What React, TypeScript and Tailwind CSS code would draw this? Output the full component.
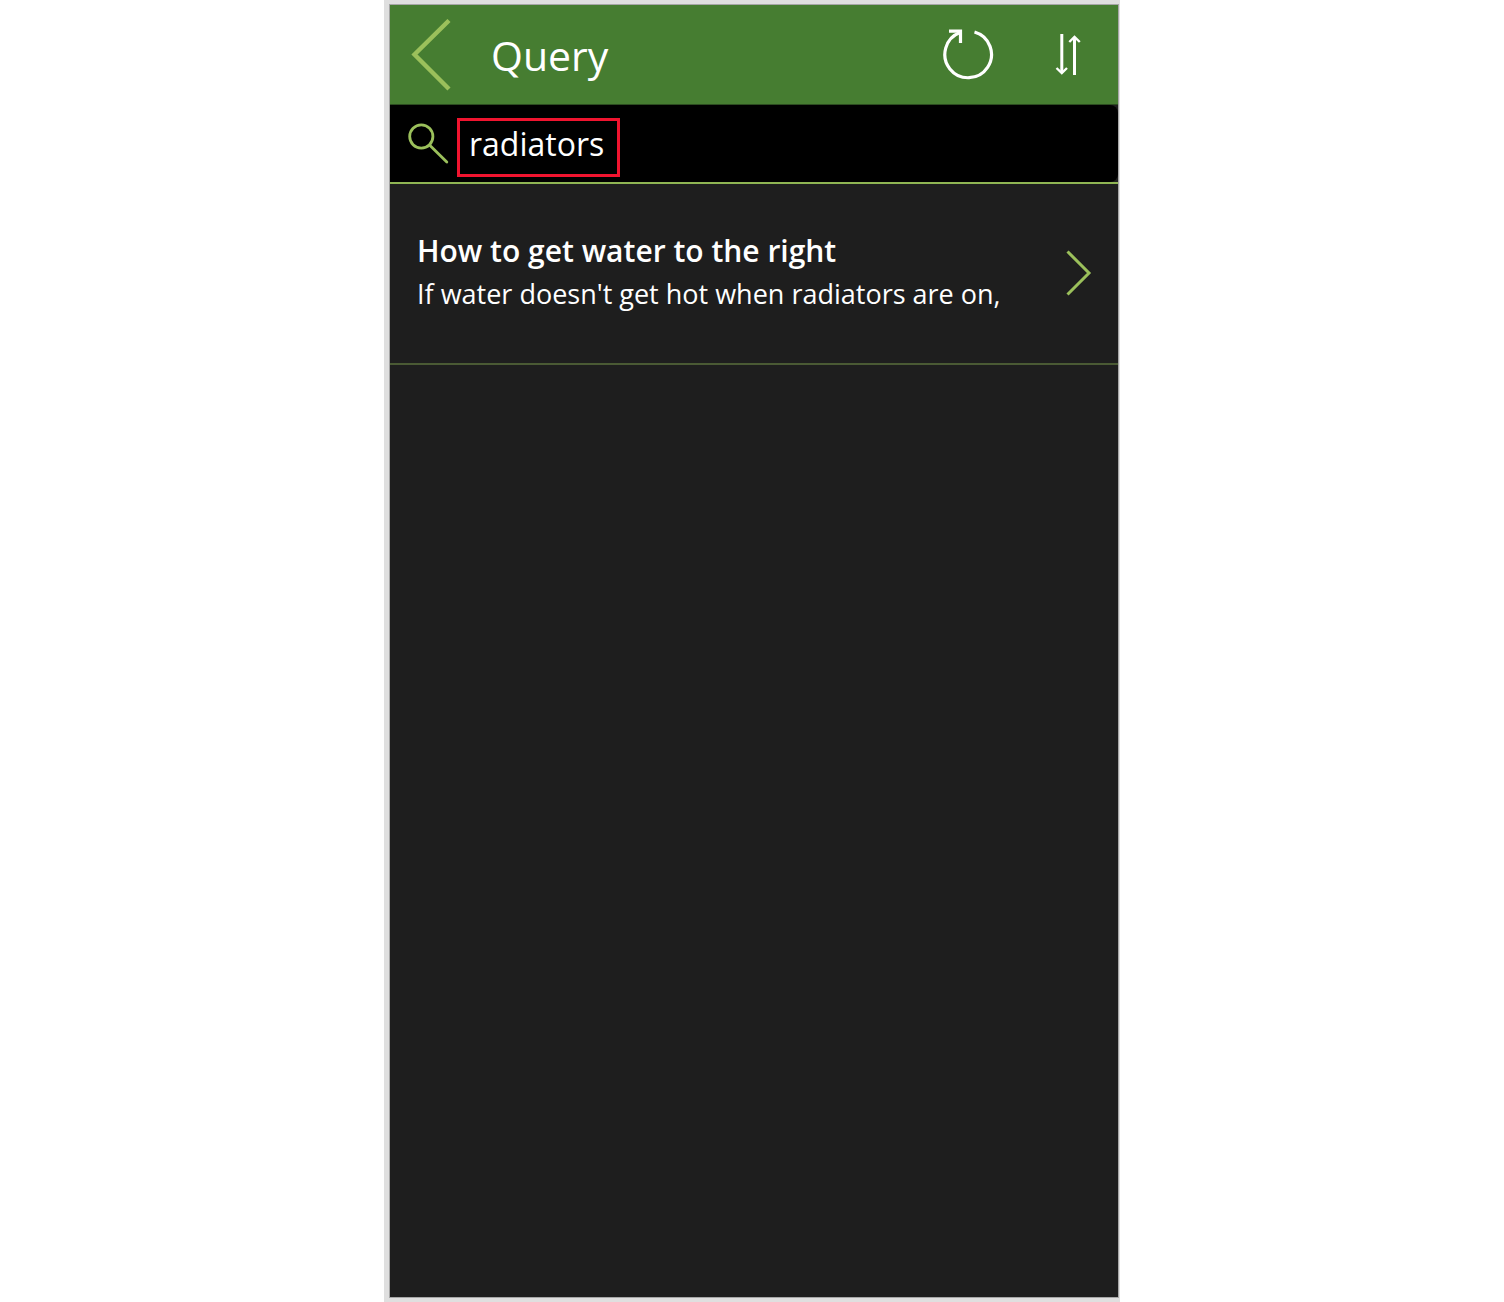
import { useState } from "react";

function BackIcon() {
  return (
    <svg width="40" height="72" viewBox="0 0 40 72" fill="none" stroke="#9bc05b" strokeWidth="4.4" aria-hidden="true">
      <path d="M38 1.5 L3.5 35.5 L38 70" />
    </svg>
  );
}

function RefreshIcon() {
  return (
    <svg width="52" height="54" viewBox="0 0 52 54" fill="none" stroke="#ffffff" strokeWidth="3.2" aria-hidden="true">
      <path d="M32.5 4 A23.3 23.3 0 1 1 18 4.6" />
      <path d="M7 3.2 H18.5 V15" />
    </svg>
  );
}

function SortIcon() {
  return (
    <svg width="26" height="44" viewBox="0 0 26 44" fill="none" stroke="#ffffff" aria-hidden="true">
      <path d="M6.8 1 V39" strokeWidth="3" />
      <path d="M1.5 35 L6.8 40 L12 35" strokeWidth="2.4" />
      <path d="M19.5 42 V4" strokeWidth="3" />
      <path d="M14.3 9 L19.5 4 L24.8 9" strokeWidth="2.4" />
    </svg>
  );
}

function SearchIcon() {
  return (
    <svg width="42" height="42" viewBox="0 0 42 42" fill="none" stroke="#9bc05b" strokeWidth="2.8" strokeLinecap="round" aria-hidden="true">
      <circle cx="13.3" cy="13.5" r="11.6" />
      <path d="M21.5 22 L38.8 39" />
    </svg>
  );
}

function NextIcon() {
  return (
    <svg width="26" height="46" viewBox="0 0 26 46" fill="none" stroke="#9bc05b" strokeWidth="3" aria-hidden="true">
      <path d="M1.5 1.5 L23 23 L1.5 44.5" />
    </svg>
  );
}

const items = [
  {
    title: "How to get water to the right",
    detail: "If water doesn't get hot when radiators are on,",
  },
];

export default function App() {
  const [query, setQuery] = useState("radiators");

  return (
    <div className="min-h-screen bg-white font-['Open_Sans',sans-serif] text-white">
      <main className="mx-auto flex min-h-screen w-full max-w-[736px] flex-col bg-[#dfdfdf] py-1 pr-px pl-[5px]">
        <div className="flex grow flex-col border border-[#a6a6a6] bg-[#1e1e1e]">
          <header className="flex h-[100px] items-center border-b border-[#2c4c20] bg-[#467d31] pr-[37px] pl-[21px]">
            <button type="button" aria-label="Back">
              <BackIcon />
            </button>
            <h1 className="ml-10 grow text-[41px] leading-[56px]">Query</h1>
            <button type="button" aria-label="Refresh">
              <RefreshIcon />
            </button>
            <button type="button" aria-label="Sort" className="ml-[61px]">
              <SortIcon />
            </button>
          </header>

          <div className="border-b-2 border-[#8fb553]">
            <div className="flex h-[77px] items-center rounded-r-lg bg-black pl-[18px]">
              <label htmlFor="query" aria-label="Search">
                <SearchIcon />
              </label>
              <input
                id="query"
                type="text"
                value={query}
                onChange={(event) => setQuery(event.target.value)}
                className="mt-2 ml-[7px] h-[59px] w-[163px] border-3 border-[#f0142f] bg-black px-[9px] pb-2 text-[32px] outline-none"
              />
            </div>
          </div>

          <ul>
            {items.map((item) => (
              <li key={item.title} className="border-b-2 border-[#4a5a34]">
                <a href="#detail" className="flex h-[179px] items-center justify-between pr-[26px] pb-0.5 pl-[27px]">
                  <div className="pb-0.5">
                    <h2 className="text-[30px] leading-[44px] font-semibold">{item.title}</h2>
                    <p className="text-[27px] leading-[42px]">{item.detail}</p>
                  </div>
                  <NextIcon />
                </a>
              </li>
            ))}
          </ul>
        </div>
      </main>
    </div>
  );
}
